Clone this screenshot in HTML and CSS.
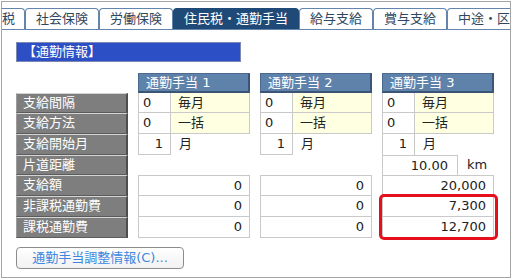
FILE: index.html
```html
<!DOCTYPE html>
<html lang="ja">
<head>
  <meta charset="UTF-8">
  <meta name="viewport" content="width=device-width, initial-scale=1.0">
  <title>通勤情報</title>
  <link rel="stylesheet" href="styles.css">
</head>
<body>

  <div class="frame">
    <div class="tabs">
      <div class="tab tab-cut">税</div>
      <div class="tab">社会保険</div>
      <div class="tab">労働保険</div>
      <div class="tab active">住民税・通勤手当</div>
      <div class="tab">給与支給</div>
      <div class="tab">賞与支給</div>
      <div class="tab">中途・区分</div>
    </div>

    <div class="panel">
      <div class="section-title">【通勤情報】</div>

      <div class="grid">
        <div></div>
        <div class="col-head">通勤手当 1</div>
        <div class="col-head">通勤手当 2</div>
        <div class="col-head">通勤手当 3</div>

        <div class="label">支給間隔</div>
        <div class="field"><span class="cell num">0</span><span class="cell pick">毎月</span></div>
        <div class="field"><span class="cell num">0</span><span class="cell pick">毎月</span></div>
        <div class="field"><span class="cell num">0</span><span class="cell pick">毎月</span></div>

        <div class="label">支給方法</div>
        <div class="field"><span class="cell num">0</span><span class="cell pick">一括</span></div>
        <div class="field"><span class="cell num">0</span><span class="cell pick">一括</span></div>
        <div class="field"><span class="cell num">0</span><span class="cell pick">一括</span></div>

        <div class="label">支給開始月</div>
        <div class="field"><span class="cell num right">1</span><span class="unit">月</span></div>
        <div class="field"><span class="cell num right">1</span><span class="unit">月</span></div>
        <div class="field"><span class="cell num right open">1</span><span class="unit">月</span></div>

        <div class="label">片道距離</div>
        <div></div>
        <div></div>
        <div class="field"><span class="cell dist">10.00</span><span class="unit km">km</span></div>

        <div class="label">支給額</div>
        <div class="field"><span class="cell amount top">0</span></div>
        <div class="field"><span class="cell amount top">0</span></div>
        <div class="field"><span class="cell amount top">20,000</span></div>

        <div class="label">非課税通勤費</div>
        <div class="field"><span class="cell amount">0</span></div>
        <div class="field"><span class="cell amount">0</span></div>
        <div class="field"><span class="cell amount">7,300</span></div>

        <div class="label">課税通勤費</div>
        <div class="field"><span class="cell amount">0</span></div>
        <div class="field"><span class="cell amount">0</span></div>
        <div class="field"><span class="cell amount">12,700</span></div>

        <div class="highlight"></div>
      </div>

      <button class="adjust">通勤手当調整情報(C)...</button>
    </div>
  </div>

</body>
</html>
```

FILE: styles.css
```css
body {
  margin: 0;
  font-family: "DejaVu Sans", "Noto Sans CJK JP", sans-serif;
  font-size: 13px;
  color: #222;
  background-color: #fff;
}
.frame {
  margin: 1px 1px 0 1px;
  height: 277px;
  box-sizing: border-box;
  border: 1px solid #a5a5a5;
  overflow: hidden;
}
.tabs {
  display: flex;
  padding-top: 6px;
  border-bottom: 1px solid #6384ab;
  overflow: hidden;
}
.tab {
  flex: none;
  height: 21px;
  box-sizing: border-box;
  padding: 0 10px;
  border: 1px solid #6384ab;
  border-bottom: 0;
  border-radius: 4px 4px 0 0;
  line-height: 20px;
  color: #2e4660;
  white-space: nowrap;
}
.tab-cut {
  padding: 0 9px 0 0;
  border-left: 0;
  border-top-left-radius: 0;
}
.tab.active {
  height: 22px;
  margin-bottom: -1px;
  background-color: #1f4a78;
  border-color: #1f4a78;
  color: #fff;
}
.panel {
  padding: 12px 14px 0;
}
.section-title {
  width: 225px;
  height: 20px;
  box-sizing: border-box;
  padding-left: 6px;
  border: 1px solid #7d89b0;
  background-color: #2c4fc6;
  color: #fff;
  line-height: 18px;
}
.grid {
  position: relative;
  display: grid;
  grid-template-columns: repeat(4, 112px);
  grid-template-rows: 20px 20px 21px 21px 20px 21px 21px 21px;
  column-gap: 10px;
  margin-top: 11px;
}
.col-head {
  box-sizing: border-box;
  padding-left: 7px;
  border: 1px solid #4a6a90;
  border-right: 2px solid #3a5578;
  border-bottom: 2px solid #3a5578;
  background-color: #5f82aa;
  color: #fff;
  line-height: 17px;
}
.label {
  box-sizing: border-box;
  padding-left: 6px;
  border-top: 1px solid #d4d4d4;
  border-left: 1px solid #9c9c9c;
  border-right: 2px solid #4e4e4e;
  border-bottom: 1px solid #5c5c5c;
  background-color: #7e7e7e;
  color: #fff;
  line-height: 18px;
}
.field {
  display: flex;
}
.cell {
  box-sizing: border-box;
  border: 1px solid #c9c9c9;
  border-top: 0;
  background-color: #fff;
  line-height: 19px;
  white-space: nowrap;
}
.num {
  width: 33px;
  padding-left: 4px;
}
.num.right {
  padding: 0 7px 0 0;
  text-align: right;
}
.num.open {
  border-bottom: 0;
}
.pick {
  flex: 1;
  padding-left: 7px;
  border-left: 0;
  background-color: #ffffe1;
}
.unit {
  padding-left: 8px;
  line-height: 19px;
}
.unit.km {
  padding-left: 9px;
}
.dist {
  width: 76px;
  padding-right: 9px;
  border-top: 1px solid #c9c9c9;
  border-bottom: 0;
  text-align: right;
}
.amount {
  flex: 1;
  padding-right: 7px;
  text-align: right;
}
.amount.top {
  border-top: 1px solid #c9c9c9;
}
.highlight {
  position: absolute;
  grid-column: 4;
  grid-row: 7 / 9;
  top: -2px;
  right: -2px;
  bottom: -2px;
  left: -3px;
  border: 3px solid #e5101c;
  border-radius: 5px;
  pointer-events: none;
}
.adjust {
  display: block;
  width: 168px;
  height: 22px;
  margin-top: 9px;
  padding: 0;
  border: 1px solid #8c8c8c;
  border-radius: 4px;
  background: linear-gradient(#ffffff, #f1f1f1);
  color: #3d88dd;
  font-family: "DejaVu Sans", "Noto Sans CJK JP", sans-serif;
  font-size: 13px;
  line-height: 20px;
}
```
